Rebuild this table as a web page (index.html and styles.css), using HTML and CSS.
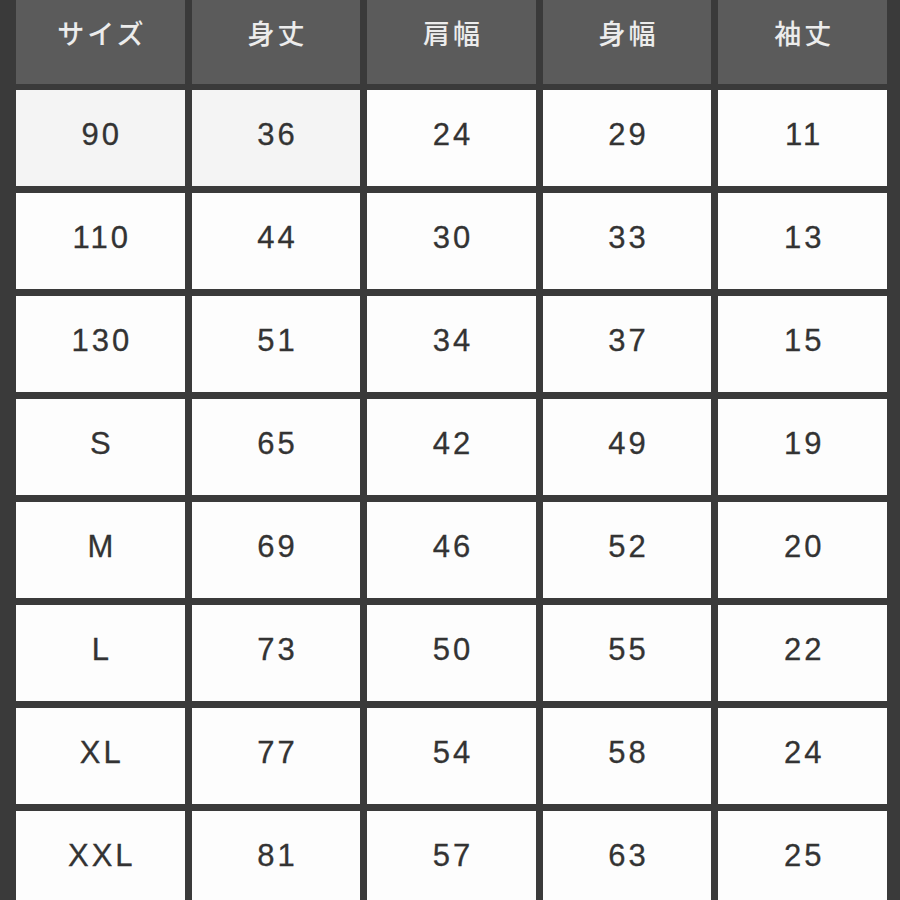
FILE: index.html
```html
<!DOCTYPE html>
<html lang="ja">
<head>
<meta charset="utf-8">
<link rel="stylesheet" href="styles.css">
</head>
<body>
<div class="table">
  <div class="cell head">サイズ</div>
  <div class="cell head">身丈</div>
  <div class="cell head">肩幅</div>
  <div class="cell head">身幅</div>
  <div class="cell head">袖丈</div>

  <div class="cell first">90</div><div class="cell first">36</div><div class="cell">24</div><div class="cell">29</div><div class="cell">11</div>
  <div class="cell">110</div><div class="cell">44</div><div class="cell">30</div><div class="cell">33</div><div class="cell">13</div>
  <div class="cell">130</div><div class="cell">51</div><div class="cell">34</div><div class="cell">37</div><div class="cell">15</div>
  <div class="cell">S</div><div class="cell">65</div><div class="cell">42</div><div class="cell">49</div><div class="cell">19</div>
  <div class="cell">M</div><div class="cell">69</div><div class="cell">46</div><div class="cell">52</div><div class="cell">20</div>
  <div class="cell">L</div><div class="cell">73</div><div class="cell">50</div><div class="cell">55</div><div class="cell">22</div>
  <div class="cell">XL</div><div class="cell">77</div><div class="cell">54</div><div class="cell">58</div><div class="cell">24</div>
  <div class="cell">XXL</div><div class="cell">81</div><div class="cell">57</div><div class="cell">63</div><div class="cell">25</div>
</div>
</body>
</html>
```
FILE: styles.css
```css
html, body {
  margin: 0;
  padding: 0;
  background: #3a3a3a;
  width: 900px;
  height: 900px;
  overflow: hidden;
}
.table {
  display: grid;
  grid-template-columns: repeat(5, 1fr);
  grid-template-rows: 83px repeat(8, 96px);
  column-gap: 7px;
  row-gap: 7px;
  width: 871px;
  padding-left: 16px;
  font-family: "Liberation Sans", "Noto Sans CJK JP", sans-serif;
}
.cell {
  display: flex;
  align-items: center;
  justify-content: center;
  background: #fdfdfd;
  color: #333333;
  font-size: 31px;
  letter-spacing: 3px;
  padding-left: 3px;
  padding-bottom: 6px;
  -webkit-text-stroke: 0.3px #333333;
}
.head {
  background: #5b5b5b;
  color: #ececec;
  font-family: "Noto Sans CJK JP", sans-serif;
  font-size: 27px;
  font-weight: 500;
  letter-spacing: 3px;
  padding-bottom: 20px;
  margin-bottom: -1px;
  -webkit-text-stroke: 0;
}
.first {
  background: #f4f4f4;
}
```
